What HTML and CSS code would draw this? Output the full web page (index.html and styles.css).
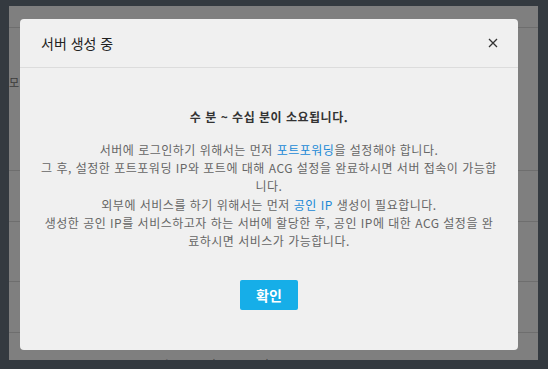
FILE: index.html
```html
<!DOCTYPE html>
<html lang="ko">

<head>
    <meta charset="UTF-8">
    <meta name="viewport" content="width=device-width, initial-scale=1.0">
    <title>서버 생성 중</title>
    <link rel="stylesheet" href="styles.css">
</head>

<body>
    <div class="page">
        <div class="row row-top"></div>
        <div class="row row-big"><span class="cut">모</span></div>
        <div class="row row-sm"></div>
        <div class="row row-md"></div>
        <div class="row row-sm"></div>
        <div class="row row-last"><span class="server">mysql-server(1100724)</span></div>

        <div class="backdrop"></div>

        <div class="modal">
            <div class="modal-header">
                <h2>서버 생성 중</h2>
                <button class="close" aria-label="닫기">
                    <svg width="10" height="10" viewBox="0 0 10 10">
                        <path d="M1 1L9 9M9 1L1 9" stroke="#333" stroke-width="1.3" fill="none" />
                    </svg>
                </button>
            </div>
            <div class="modal-body">
                <p class="lead">수 분 ~ 수십 분이 소요됩니다.</p>
                <p>서버에 로그인하기 위해서는 먼저 <a href="#">포트포워딩</a>을 설정해야 합니다.<br>
                    그 후, 설정한 포트포워딩 IP와 포트에 대해 ACG 설정을 완료하시면 서버 접속이 가능합니다.</p>
                <p class="second">외부에 서비스를 하기 위해서는 먼저 <a href="#">공인 IP</a> 생성이 필요합니다.<br>
                    생성한 공인 IP를 서비스하고자 하는 서버에 할당한 후, 공인 IP에 대한 ACG 설정을 완료하시면 서비스가 가능합니다.</p>
                <button class="ok">확인</button>
            </div>
        </div>
    </div>
</body>

</html>
```

FILE: styles.css
```css
* {
    margin: 0;
    padding: 0;
    box-sizing: border-box;
    font-family: "Noto Sans CJK KR", "Noto Sans", sans-serif;
}

body {
    background-color: #343a40;
    width: 548px;
    height: 369px;
    overflow: hidden;
}

.page {
    position: relative;
    margin: 6px 10px 0 9px;
    height: 354px;
    background-color: #fff;
    overflow: hidden;
}

.row {
    border-bottom: 1px solid #dcdcdc;
}

.row-top {
    height: 22px;
}

.row-big {
    height: 143px;
    padding-top: 48px;
}

.row-sm {
    height: 51px;
}

.row-md {
    height: 60px;
}

.row-last {
    border-bottom: none;
    padding: 18px 0 0 123px;
}

.cut {
    display: block;
    font-size: 11px;
    line-height: 13px;
    color: #777;
}

.server {
    font-size: 13px;
    color: #888;
}

.backdrop {
    position: absolute;
    top: 0;
    left: 0;
    right: 0;
    bottom: 0;
    background-color: rgba(0, 0, 0, 0.5);
}

.modal {
    position: absolute;
    top: 13px;
    left: 11px;
    width: 498px;
    background-color: #f0f0f0;
    border-radius: 4px;
}

.modal-header {
    height: 49px;
    padding: 0 20px 0 21px;
    display: flex;
    align-items: center;
    justify-content: space-between;
    border-bottom: 1px solid #dcdcdc;
}

.modal-header h2 {
    font-size: 14px;
    font-weight: 400;
    color: #222;
}

.close {
    width: 10px;
    height: 10px;
    border: none;
    background: none;
    display: flex;
    cursor: pointer;
}

.modal-body {
    padding: 40px 20px 40px;
    text-align: center;
    font-size: 12px;
    line-height: 18px;
    letter-spacing: 0.5px;
    color: #666;
}

.modal-body .lead {
    font-weight: 700;
    color: #333;
    margin-bottom: 15px;
}

.modal-body .second {
    margin-top: 1px;
}

.modal-body a {
    color: #1a89d6;
    text-decoration: none;
}

.ok {
    margin-top: 30px;
    width: 58px;
    height: 30px;
    border: none;
    border-radius: 2px;
    background-color: #16aee8;
    color: #fff;
    font-size: 14px;
    font-weight: 700;
    letter-spacing: 0;
    cursor: pointer;
}
```
